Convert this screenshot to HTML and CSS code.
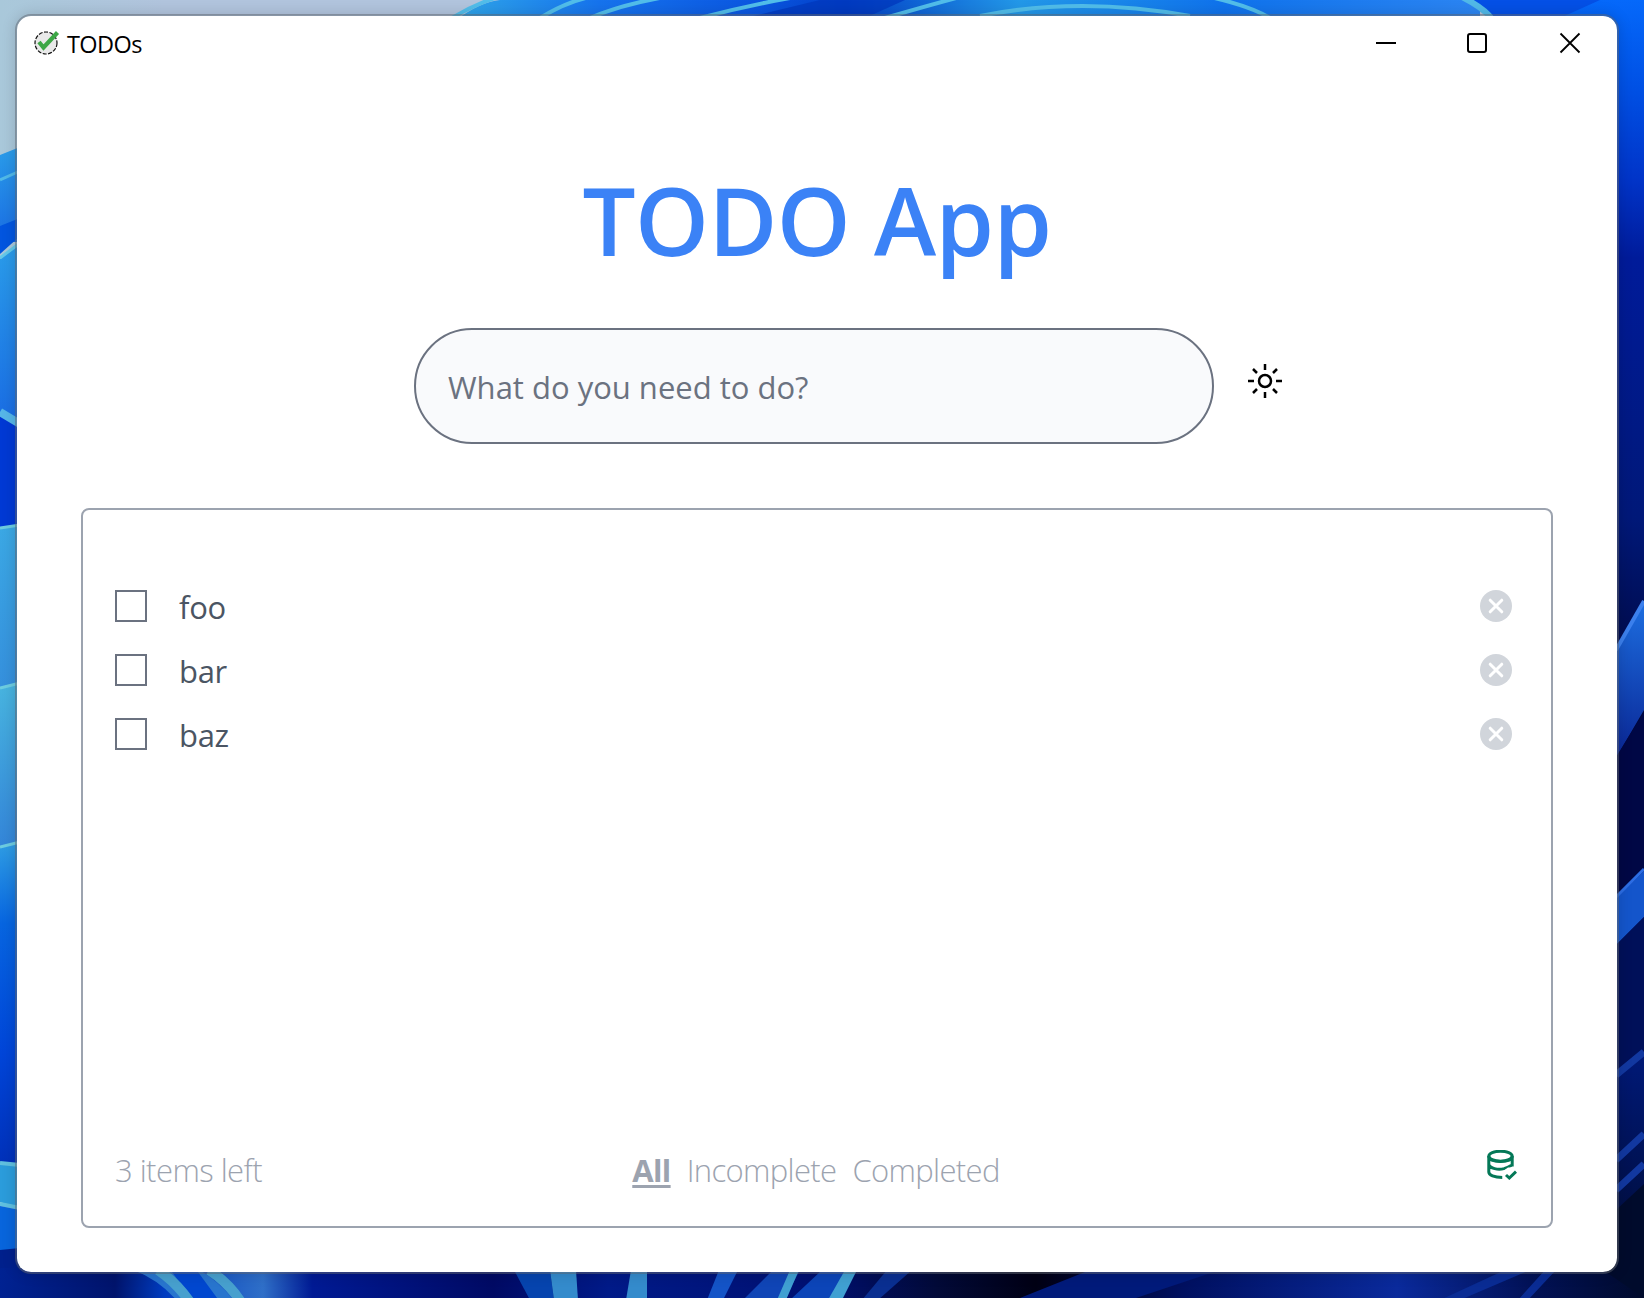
FILE: index.html
```html
<!DOCTYPE html>
<html lang="en">
<head>
<meta charset="utf-8">
<title>TODOs</title>
<link rel="stylesheet" href="styles.css">
</head>
<body>
<svg class="wallpaper" viewBox="0 0 1644 1298" aria-hidden="true">
  <defs>
    <linearGradient id="sky" x1="0" x2="1" y1="0" y2="0"><stop offset="0" stop-color="#a9c8da"/><stop offset=".1" stop-color="#b1c4dd"/><stop offset="1" stop-color="#b1c4dd"/></linearGradient>
    <linearGradient id="right" x1="0" x2="0" y1="0" y2="1"><stop offset="0" stop-color="#0569fb"/><stop offset=".07" stop-color="#0050e4"/><stop offset=".14" stop-color="#0134c8"/><stop offset=".2" stop-color="#001b9a"/><stop offset=".4" stop-color="#001878"/><stop offset=".55" stop-color="#000638"/><stop offset=".8" stop-color="#001a7c"/><stop offset="1" stop-color="#000a2c"/></linearGradient>
    <linearGradient id="petal" x1="0" x2="0" y1="0" y2="1"><stop offset="0" stop-color="#3ba8e4"/><stop offset="1" stop-color="#358fdc"/></linearGradient>
    <linearGradient id="petal2" x1="0" x2="0" y1="0" y2="1"><stop offset="0" stop-color="#48b4df"/><stop offset="1" stop-color="#3384d8"/></linearGradient>
    <linearGradient id="deep" x1="0" x2="0" y1="0" y2="1"><stop offset="0" stop-color="#2f9de3"/><stop offset=".25" stop-color="#0765e0"/><stop offset=".65" stop-color="#0045d8"/><stop offset="1" stop-color="#0030b8"/></linearGradient>
    <linearGradient id="upper" x1="0" x2="0" y1="0" y2="1"><stop offset="0" stop-color="#2a9ce9"/><stop offset="1" stop-color="#1a6de3"/></linearGradient>
    <linearGradient id="band" x1="0" x2="0" y1="0" y2="1"><stop offset="0" stop-color="#1d6ee0"/><stop offset="1" stop-color="#0a2695"/></linearGradient>
    <linearGradient id="top" x1="0" x2="1" y1="0" y2="0"><stop offset="0" stop-color="#2fa6e9"/><stop offset=".14" stop-color="#1673ed"/><stop offset=".3" stop-color="#0a55e0"/><stop offset=".38" stop-color="#0240c8"/><stop offset=".55" stop-color="#2398e8"/><stop offset=".75" stop-color="#0f72ec"/><stop offset="1" stop-color="#2c85f2"/></linearGradient>
    <linearGradient id="floor" x1="0" x2="1" y1="0" y2="0"><stop offset="0" stop-color="#002292"/><stop offset=".07" stop-color="#00146c"/><stop offset=".1" stop-color="#003cc0"/><stop offset=".16" stop-color="#2f6fc8"/><stop offset=".19" stop-color="#001a94"/><stop offset=".3" stop-color="#000a64"/><stop offset=".37" stop-color="#001a88"/><stop offset=".5" stop-color="#001070"/><stop offset=".57" stop-color="#020a38"/><stop offset=".63" stop-color="#000014"/><stop offset=".72" stop-color="#001060"/><stop offset=".85" stop-color="#0a2a9c"/><stop offset=".93" stop-color="#021258"/><stop offset="1" stop-color="#000a2c"/></linearGradient>
  </defs>
  <rect width="1644" height="1298" fill="url(#sky)"/>
  <path d="M456 20Q480 2 500 0H1480V20Z" fill="url(#top)"/>
  <g fill="none" stroke="#51bdea" stroke-width="4">
    <path d="M452 18Q475 4 498-3M540 18Q566 2 590-3M590 18Q620 5 665-3M700 18Q745 6 790-2M980 16Q1080-4 1190 16"/>
    <path d="M885 18Q930 5 960-3M1210-3Q1250 6 1270 18"/>
  </g>
  <path d="M820 0H905L865 18H745Z" fill="#0238bd" opacity=".75"/>
  <path d="M1464-2H1644V1298H1600V20H1492Z" fill="url(#right)"/>
  <path d="M1464-2Q1484 9 1492 18H1560L1600 0Z" fill="#0450e6"/>
  <path d="M1462-3Q1484 8 1492 19" fill="none" stroke="#51b9e8" stroke-width="6"/>

  <path d="M0 155L20 147V242H0Z" fill="url(#upper)"/>
  <path d="M0 180L20 171M0 241L20 232" fill="none" stroke="#51b9e8" stroke-width="3"/>
  <path d="M0 226L20 218V236L0 254Z" fill="#0255df"/>
  <path d="M0 259L20 244V420H0Z" fill="url(#upper)"/>
  <path d="M0 258L20 243" stroke="#63c8e9" stroke-width="3"/>
  <path d="M0 415L20 426V530H0Z" fill="#0039d4"/>
  <path d="M0 412L20 424" stroke="#56b6e8" stroke-width="8"/>
  <path d="M0 528L20 525V690H0Z" fill="url(#petal)"/>
  <path d="M0 688L20 683V850H0Z" fill="url(#petal2)"/>
  <path d="M0 847L20 842V1168H0Z" fill="url(#deep)"/>
  <path d="M0 528L20 525M0 688L20 683M0 847L20 842" stroke="#6dcce0" stroke-width="3"/>
  <path d="M0 1163L20 1166V1208L0 1202Z" fill="#2b9cdb"/>
  <path d="M0 1163L20 1165M0 1204L20 1208" stroke="#60c0df" stroke-width="4"/>
  <path d="M0 1206L20 1210V1252H0Z" fill="#0865dc"/>
  <path d="M0 1250L20 1248V1298H0Z" fill="#00208c"/>

  <path d="M1616 651L1644 602V710L1616 758Z" fill="url(#band)"/>
  <path d="M1616 650L1644 601" stroke="#3c80ed" stroke-width="4"/>
  <path d="M1616 757L1644 712V872L1616 897Z" fill="#000745"/>
  <path d="M1616 898L1644 871V917L1616 945Z" fill="#1455cb"/>
  <path d="M1616 897L1644 869" stroke="#2c6de4" stroke-width="3"/>
  <path d="M1616 945L1644 917V1052L1616 1075Z" fill="#001059"/>
  <path d="M1616 1075L1644 1052M1616 1160L1644 1134M1616 1190L1644 1164" stroke="#1238a0" stroke-width="7"/>
  <path d="M1616 1210L1644 1184V1298H1590V1260Z" fill="#000b2c"/>

  <path d="M18 1268H1600L1644 1298H0V1268Z" fill="url(#floor)"/>
  <path d="M128 1268Q158 1278 178 1302H235Q218 1280 196 1268Z" fill="#2875ce"/>
  <path d="M172 1272L194 1302H220L198 1272Z" fill="#0047cf"/>
  <g fill="none" stroke="#47a0ce" stroke-width="10"><path d="M158 1270Q176 1282 190 1302M209 1270Q229 1283 241 1302"/></g>
  <path d="M514 1270H550L554 1300H530Z" fill="#0644ae"/>
  <path d="M550 1270H576L578 1300H554Z" fill="#348bcc"/>
  <path d="M631 1270H647V1300H626Z" fill="#348bcc"/>
  <path d="M719 1270H738L723 1300H707Z" fill="#1454c7"/>
  <path d="M773 1270H800L784 1300H743Z" fill="#1045b6"/>
  <path d="M790 1270H799L786 1300H777ZM844 1270H857L842 1300H827Z" fill="#40a0d2"/>
  <path d="M822 1270H845L828 1300H790Z" fill="#0c45b8"/>
  <path d="M887 1270H912L878 1300H862Z" fill="#0a2f91"/>
  <path d="M1015 1300L1090 1270H1220L1130 1300Z" fill="#001a7a"/>
  <path d="M1440 1300L1505 1270H1530L1460 1300ZM1518 1300L1545 1270H1556L1528 1300Z" fill="#0a2c94"/>
</svg>

<main class="window">
  <header class="titlebar">
    <svg class="app-icon" viewBox="0 0 26 26"><circle cx="12" cy="13" r="11" fill="#e9e9e9" stroke="#111" stroke-width="1.2" stroke-dasharray="4 1.5"/><path d="M5 12L9.5 17.5L23.5 2.5" fill="none" stroke="#3da746" stroke-width="4.2"/></svg>
    <span class="app-name">TODOs</span>
    <div class="controls">
      <svg viewBox="0 0 20 20"><path d="M0 10H20" stroke-width="2"/></svg>
      <svg viewBox="0 0 20 20"><rect x="1" y="1" width="18" height="18" rx="2" stroke-width="2"/></svg>
      <svg viewBox="0 0 20 20"><path d="M.5.5L19.5 19.5M19.5.5L.5 19.5" stroke-width="1.8"/></svg>
    </div>
  </header>

  <h1 class="title">TODO App</h1>

  <form class="entry">
    <input class="entry-input" type="text" placeholder="What do you need to do?" aria-label="New item">
    <svg class="sun" viewBox="0 0 34 34"><circle cx="17" cy="17" r="6"/><path d="M17 0V6M17 28V34M0 17H6M28 17H34M5 5L9 9M25 25L29 29M5 29L9 25M25 9L29 5"/></svg>
  </form>

  <section class="card">
    <ul class="items">
      <li class="item"><input class="check" type="checkbox" aria-label="foo"><span class="label">foo</span><svg class="remove" viewBox="0 0 32 32"><circle cx="16" cy="16" r="16"/><path d="M10.2 10.2L21.8 21.8M21.8 10.2L10.2 21.8"/></svg></li>
      <li class="item"><input class="check" type="checkbox" aria-label="bar"><span class="label">bar</span><svg class="remove" viewBox="0 0 32 32"><circle cx="16" cy="16" r="16"/><path d="M10.2 10.2L21.8 21.8M21.8 10.2L10.2 21.8"/></svg></li>
      <li class="item"><input class="check" type="checkbox" aria-label="baz"><span class="label">baz</span><svg class="remove" viewBox="0 0 32 32"><circle cx="16" cy="16" r="16"/><path d="M10.2 10.2L21.8 21.8M21.8 10.2L10.2 21.8"/></svg></li>
    </ul>
    <footer class="footer">
      <span class="count">3 items left</span>
      <nav class="filters"><a class="filter active">All</a><a class="filter incomplete">Incomplete</a><a class="filter completed">Completed</a></nav>
      <svg class="database" viewBox="0 0 30 30"><ellipse cx="13.5" cy="6.2" rx="11.7" ry="5"/><path d="M1.8 6V22C1.8 25 7 27.4 15.5 27.4M25.2 6V16.5M1.8 14.5C3 18.6 11 20 17 18.6Q21 17.5 25 15M1.8 6.8C3 13 24 13 25.2 6.8"/><path class="database-gap" d="M15.5 30V21.5L21 17.5H30V30Z"/><path d="M19 25L22.3 28L29 21.7"/></svg>
    </footer>
  </section>
</main>
</body>
</html>
```
FILE: styles.css
```css
* { box-sizing: border-box; }

body {
  margin: 0;
  height: 1298px;
  padding: 14px 0 0 15px;
  overflow: hidden;
  font-family: "Open Sans", "Noto Sans", sans-serif;
}

.wallpaper {
  position: absolute;
  inset: 0;
  z-index: -1;
  width: 1644px;
  height: 1298px;
}

.window {
  display: flex;
  flex-direction: column;
  width: 1604px;
  height: 1260px;
  border: 2px solid rgba(96, 102, 112, .5);
  border-radius: 16px;
  background: #fff;
  background-clip: padding-box;
  box-shadow: 0 0 14px rgba(0, 0, 0, .15);
}

.titlebar {
  display: flex;
  align-items: center;
  height: 56px;
  padding: 0 37px 0 17px;
}

.app-icon { width: 26px; height: 26px; margin-top: -3px; }

.app-name {
  margin-left: 7px;
  color: #000;
  font-size: 23.5px;
  line-height: 32px;
  letter-spacing: -.6px;
}

.controls {
  display: grid;
  grid-template-columns: 91px 93px 20px;
  margin: -2px 0 0 auto;
}

.controls svg {
  width: 20px;
  height: 20px;
  overflow: visible;
  fill: none;
  stroke: #000;
}

.title {
  margin: 84px 0 0;
  height: 128px;
  color: #3b82f6;
  font-size: 94px;
  font-weight: 600;
  line-height: 128px;
  letter-spacing: -.6px;
  text-align: center;
}

.entry {
  display: flex;
  align-items: center;
  gap: 34px;
  height: 116px;
  margin: 44px 0 0 397px;
}

.entry-input {
  width: 800px;
  height: 116px;
  padding: 2px 32px 0;
  border: 2px solid #6b7280;
  border-radius: 58px;
  background: #f9fafc;
  font: 400 31px "Open Sans", "Noto Sans", sans-serif;
}

.entry-input::placeholder { color: #6b7280; opacity: 1; }

.sun {
  width: 34px;
  height: 34px;
  margin-top: -11px;
  fill: none;
  stroke: #000;
  stroke-width: 2.5;
}

.card {
  display: flex;
  flex-direction: column;
  width: 1472px;
  height: 720px;
  margin: 64px 0 0 64px;
  padding: 64px 34px 24px 32px;
  border: 2px solid #9ca3af;
  border-radius: 8px;
}

.items { margin: 0; padding: 0; list-style: none; }

.item {
  display: flex;
  align-items: center;
  height: 64px;
  padding-right: 5px;
}

.check {
  width: 32px;
  height: 32px;
  margin: 0;
  appearance: none;
  border: 2px solid #6b7280;
  background: #fff;
}

.label {
  margin: 2px 0 0 32px;
  color: #4b5563;
  font-size: 31px;
  line-height: 44px;
  letter-spacing: -.3px;
}

.remove { width: 32px; height: 32px; margin-left: auto; }
.remove circle { fill: #d1d5db; }
.remove path { stroke: #fff; stroke-width: 3; stroke-linecap: round; }

.footer {
  display: grid;
  grid-template-columns: 1fr auto 1fr;
  align-items: center;
  height: 48px;
  margin-top: auto;
  margin-bottom: 8px;
  color: #9ca3af;
  font-size: 31px;
  font-weight: 300;
  line-height: 48px;
  letter-spacing: -.65px;
}

.count { letter-spacing: -.55px; }

.filters { display: flex; gap: 16px; }

.active {
  font-weight: 700;
  text-decoration: underline;
  text-decoration-thickness: 3px;
  text-underline-offset: 3px;
}

.database {
  justify-self: end;
  width: 30px;
  height: 30px;
  margin-top: -11px;
  fill: none;
  stroke: #047857;
  stroke-width: 3;
}

.database .database-gap { fill: #fff; stroke: none; }
```
